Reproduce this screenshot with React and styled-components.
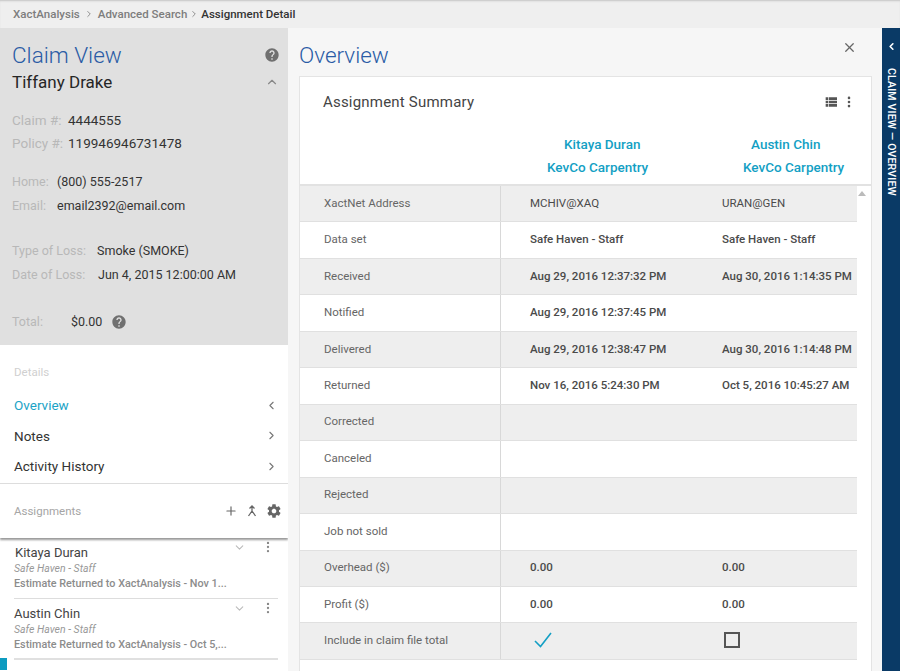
import React from "react";
import styled, { createGlobalStyle } from "styled-components";
import { ChevronDown, ChevronLeft, ChevronRight, ChevronUp, EllipsisVertical, Plus, X } from "lucide-react";

const GlobalStyle = createGlobalStyle`
  html, body { margin: 0; padding: 0; height: 100%; overflow: hidden; }
  body { font-family: Roboto, "Liberation Sans", sans-serif; color: #333; background: #f6f6f6; }
  * { box-sizing: border-box; }
`;

const Page = styled.div`
  width: 900px;
  height: 671px;
  display: flex;
  flex-direction: column;
  overflow: hidden;
`;

const Breadcrumbs = styled.div`
  height: 28px;
  flex: none;
  display: flex;
  align-items: center;
  padding-left: 13px;
  background: #efefef;
  box-shadow: inset 0 2px 2px -1px #c4c4c4;
  font-size: 11.5px;
  font-weight: 500;
  color: #7d7d7d;
`;

const Crumb = styled.span`
  color: ${(p) => (p.$current ? "#333" : "#7d7d7d")};
`;

const CrumbSep = styled.span`
  width: ${(p) => p.$w}px;
  display: flex;
  justify-content: center;
`;

const Body = styled.div`
  flex: 1;
  min-height: 0;
  display: flex;
`;

const Sidebar = styled.aside`
  width: 288px;
  flex: none;
  display: flex;
  flex-direction: column;
  background: #fff;
  overflow: hidden;
`;

const Summary = styled.div`
  height: 317px;
  flex: none;
  padding: 13px 8px 0 12px;
  background: #e0e0e0;
`;

const TitleRow = styled.div`
  display: flex;
  align-items: center;
  justify-content: space-between;
  height: 28px;
`;

const ClaimTitle = styled.h1`
  margin: 0;
  font-size: 22.5px;
  font-weight: 300;
  color: #2a5ba5;
`;

const NameRow = styled.div`
  display: flex;
  align-items: center;
  justify-content: space-between;
  height: 26px;
  margin-bottom: 13px;
  padding-right: 1px;
`;

const Name = styled.div`
  font-size: 17px;
  color: #262626;
`;

const FieldGroup = styled.div`
  margin-bottom: ${(p) => p.$gap}px;
`;

const Field = styled.div`
  display: flex;
  align-items: center;
  height: 23.5px;
  font-size: 13.5px;
  color: #333;
`;

const FieldLabel = styled.span`
  width: ${(p) => p.$w}px;
  flex: none;
  color: #b8b8b8;
`;

const SmallField = styled(Field)`
  font-size: 12.5px;
`;

const HelpSlot = styled.span`
  display: inline-flex;
  margin-left: ${(p) => p.$ml || 0}px;
`;

const DetailsList = styled.div`
  height: 139px;
  flex: none;
  padding: 20px 10px 0 14px;
  border-bottom: 1px solid #ddd;
`;

const SectionLabel = styled.div`
  font-size: 11.5px;
  color: #d0d0d0;
  height: 14px;
  margin-bottom: 11px;
`;

const NavRow = styled.div`
  display: flex;
  align-items: center;
  justify-content: space-between;
  height: 30.5px;
  font-size: 13.5px;
  color: ${(p) => (p.$active ? "#1ba3c6" : "#333")};
  svg { color: #777; }
`;

const AssignHeader = styled.div`
  height: 54px;
  flex: none;
  display: flex;
  align-items: center;
  padding: 0 6px 0 14px;
  box-shadow: 0 2px 2px #999;
  position: relative;
  z-index: 1;
`;

const AssignLabel = styled.div`
  flex: 1;
  font-size: 11.5px;
  color: #a5a5a5;
`;

const AssignTools = styled.div`
  display: flex;
  align-items: center;
  gap: 7px;
  color: #666;
`;

const AssignList = styled.div`
  flex: 1;
  min-height: 0;
  padding: 0 10px 0 14px;
  overflow: hidden;
`;

const AssignItem = styled.div`
  position: relative;
  height: 61px;
  padding-top: 7px;
  border-bottom: ${(p) => (p.$heavy ? "2px solid #e0e0e0" : "1px solid #ddd")};
`;

const AssignName = styled.div`
  font-size: 13px;
  color: #444;
  height: 16px;
  padding-left: ${(p) => p.$indent || 0}px;
`;

const AssignPlan = styled.div`
  font-size: 10.5px;
  font-style: italic;
  color: #999;
  height: 15px;
  line-height: 15px;
`;

const AssignStatus = styled.div`
  font-size: 10.8px;
  font-weight: 500;
  color: #8c8c8c;
  height: 15px;
  line-height: 15px;
`;

const ItemActions = styled.div`
  position: absolute;
  top: 2px;
  right: 3px;
  display: flex;
  align-items: center;
  gap: 15px;
  color: #bbb;
  svg:last-child { color: #888; }
`;

const ActiveTab = styled.div`
  position: absolute;
  left: -14px;
  bottom: -12px;
  width: 7px;
  height: 12px;
  background: #0d9bc0;
`;

const Main = styled.main`
  flex: 1;
  min-width: 0;
  padding: 0 10px 0 11px;
  display: flex;
  flex-direction: column;
`;

const MainHead = styled.div`
  height: 48px;
  flex: none;
  display: flex;
  align-items: flex-start;
  justify-content: space-between;
  padding-right: 15px;
  color: #666;
  svg { margin-top: 12px; }
`;

const MainTitle = styled.h2`
  margin: 14px 0 0;
  font-size: 22.5px;
  font-weight: 300;
  color: #2a5ba5;
`;

const Card = styled.section`
  flex: 1;
  min-height: 0;
  background: #fff;
  border: 1px solid #e4e4e4;
  border-bottom: none;
  overflow: hidden;
`;

const CardHead = styled.div`
  height: 50px;
  display: flex;
  align-items: center;
  justify-content: space-between;
  padding: 0 15px 0 23px;
`;

const CardTitle = styled.div`
  font-size: 15px;
  letter-spacing: 0.2px;
  color: #444;
`;

const CardTools = styled.div`
  display: flex;
  align-items: center;
  gap: 3px;
  color: #555;
`;

const People = styled.div`
  display: grid;
  grid-template-columns: 201px 201px 185px;
  height: 57px;
  padding-top: 6px;
`;

const Person = styled.div`
  grid-column: ${(p) => p.$col};
  font-size: 13.5px;
  font-weight: 500;
  line-height: 23px;
  color: #139fc4;
`;

const PersonLine = styled.div`
  padding-left: ${(p) => p.$pad}px;
`;

const TableWrap = styled.div`
  position: relative;
  border-top: 2px solid #e2e2e2;
  padding-right: 14px;
`;

const ScrollArrow = styled.div`
  position: absolute;
  top: 5px;
  right: 5px;
  width: 0;
  height: 0;
  border-left: 4px solid transparent;
  border-right: 4px solid transparent;
  border-bottom: 5px solid #bbb;
`;

const Row = styled.div`
  height: 36.46px;
  display: grid;
  grid-template-columns: 201px 1fr;
  background: ${(p) => (p.$odd ? "#eeeeee" : "#fff")};
  border-bottom: 1px solid #e0e0e0;
  font-size: 11.5px;
`;

const RowLabel = styled.div`
  display: flex;
  align-items: center;
  padding: 0 0 2px 24px;
  color: #666;
  border-right: 1px solid #d8d8d8;
`;

const Values = styled.div`
  display: grid;
  grid-template-columns: 192px 1fr;
`;

const Value = styled.div`
  display: flex;
  align-items: center;
  padding: 0 0 2px ${(p) => p.$pad}px;
  font-weight: ${(p) => (p.$regular ? 400 : 500)};
  color: #4a4a4a;
  white-space: nowrap;
`;

const EmptyBox = styled.span`
  width: 16px;
  height: 16px;
  border: 2px solid #555;
`;

const Rail = styled.div`
  width: 18px;
  flex: none;
  background: #0a3a66;
  color: #fff;
  display: flex;
  flex-direction: column;
  align-items: center;
  padding-top: 13px;
`;

const RailText = styled.div`
  writing-mode: vertical-rl;
  margin-top: 16px;
  font-size: 10.5px;
  letter-spacing: 0.2px;
  font-weight: 500;
  white-space: nowrap;
`;

const rows = [
  ["XactNet Address", "MCHIV@XAQ", "URAN@GEN"],
  ["Data set", "Safe Haven - Staff", "Safe Haven - Staff"],
  ["Received", "Aug 29, 2016 12:37:32 PM", "Aug 30, 2016 1:14:35 PM"],
  ["Notified", "Aug 29, 2016 12:37:45 PM", ""],
  ["Delivered", "Aug 29, 2016 12:38:47 PM", "Aug 30, 2016 1:14:48 PM"],
  ["Returned", "Nov 16, 2016 5:24:30 PM", "Oct 5, 2016 10:45:27 AM"],
  ["Corrected", "", ""],
  ["Canceled", "", ""],
  ["Rejected", "", ""],
  ["Job not sold", "", ""],
  ["Overhead ($)", "0.00", "0.00"],
  ["Profit ($)", "0.00", "0.00"],
];

function HelpIcon() {
  return (
    <svg width="16" height="16" viewBox="0 0 24 24" fill="#707070">
      <path d="M12 2C6.48 2 2 6.48 2 12s4.48 10 10 10 10-4.48 10-10S17.52 2 12 2zm1 17h-2v-2h2v2zm2.07-7.75l-.9.92C13.45 12.9 13 13.5 13 15h-2v-.5c0-1.1.45-2.1 1.17-2.83l1.24-1.26c.37-.36.59-.86.59-1.41 0-1.1-.9-2-2-2s-2 .9-2 2H8c0-2.21 1.79-4 4-4s4 1.79 4 4c0 .88-.36 1.68-.93 2.25z" />
    </svg>
  );
}

function ViewListIcon() {
  return (
    <svg width="16" height="16" viewBox="0 0 24 24" fill="#555">
      <path d="M4 14h4v-4H4v4zm0 5h4v-4H4v4zM4 9h4V5H4v4zm5 5h12v-4H9v4zm0 5h12v-4H9v4zM9 5v4h12V5H9z" />
    </svg>
  );
}

function MergeIcon() {
  return (
    <svg width="14" height="14" viewBox="0 0 14 14" fill="none" stroke="#666" strokeWidth="1.3">
      <path d="M4.5 4.5 7 2l2.5 2.5M7 2v5M7 7 3.5 12M7 7l3.5 5" />
    </svg>
  );
}

function GearIcon() {
  return (
    <svg width="16" height="16" viewBox="0 0 24 24" fill="#666">
      <path d="M19.43 12.98c.04-.32.07-.64.07-.98s-.03-.66-.07-.98l2.11-1.65c.19-.15.24-.42.12-.64l-2-3.46c-.12-.22-.39-.3-.61-.22l-2.49 1c-.52-.4-1.08-.73-1.69-.98l-.38-2.65C14.46 2.18 14.25 2 14 2h-4c-.25 0-.46.18-.49.42l-.38 2.65c-.61.25-1.17.59-1.69.98l-2.49-1c-.23-.09-.49 0-.61.22l-2 3.46c-.13.22-.07.49.12.64l2.11 1.65c-.04.32-.07.65-.07.98s.03.66.07.98l-2.11 1.65c-.19.15-.24.42-.12.64l2 3.46c.12.22.39.3.61.22l2.49-1c.52.4 1.08.73 1.69.98l.38 2.65c.03.24.24.42.49.42h4c.25 0 .46-.18.49-.42l.38-2.65c.61-.25 1.17-.59 1.69-.98l2.49 1c.23.09.49 0 .61-.22l2-3.46c.12-.22.07-.49-.12-.64l-2.11-1.65zM12 15.5c-1.93 0-3.5-1.57-3.5-3.5s1.57-3.5 3.5-3.5 3.5 1.57 3.5 3.5-1.57 3.5-3.5 3.5z" />
    </svg>
  );
}

function CheckMark() {
  return (
    <svg width="18" height="16" viewBox="0 0 18 16" fill="none" stroke="#139fc4" strokeWidth="1.6">
      <path d="M1 9l5.5 5.5L17 1" />
    </svg>
  );
}

function AssignmentItem({ name, status, indent, active, heavy }) {
  return (
    <AssignItem $heavy={heavy}>
      <AssignName $indent={indent}>{name}</AssignName>
      <AssignPlan>Safe Haven - Staff</AssignPlan>
      <AssignStatus>{status}</AssignStatus>
      <ItemActions>
        <ChevronDown size={13} />
        <EllipsisVertical size={14} />
      </ItemActions>
      {active && <ActiveTab />}
    </AssignItem>
  );
}

export default function App() {
  return (
    <Page>
      <GlobalStyle />
      <Breadcrumbs>
        <Crumb>XactAnalysis</Crumb>
        <CrumbSep $w={18}><ChevronRight size={10} /></CrumbSep>
        <Crumb>Advanced Search</Crumb>
        <CrumbSep $w={14}><ChevronRight size={10} /></CrumbSep>
        <Crumb $current>Assignment Detail</Crumb>
      </Breadcrumbs>
      <Body>
        <Sidebar>
          <Summary>
            <TitleRow>
              <ClaimTitle>Claim View</ClaimTitle>
              <HelpIcon />
            </TitleRow>
            <NameRow>
              <Name>Tiffany Drake</Name>
              <ChevronUp size={14} color="#888" />
            </NameRow>
            <FieldGroup $gap={15}>
              <Field><FieldLabel $w={56}>Claim #:</FieldLabel>4444555</Field>
              <Field><FieldLabel $w={56}>Policy #:</FieldLabel>119946946731478</Field>
            </FieldGroup>
            <FieldGroup $gap={22}>
              <SmallField><FieldLabel $w={45}>Home:</FieldLabel>(800) 555-2517</SmallField>
              <SmallField><FieldLabel $w={45}>Email:</FieldLabel>email2392@email.com</SmallField>
            </FieldGroup>
            <FieldGroup $gap={24}>
              <SmallField><FieldLabel $w={85}>Type of Loss:</FieldLabel>Smoke (SMOKE)</SmallField>
              <SmallField><FieldLabel $w={86}>Date of Loss:</FieldLabel>Jun 4, 2015 12:00:00 AM</SmallField>
            </FieldGroup>
            <SmallField>
              <FieldLabel $w={59}>Total:</FieldLabel>$0.00
              <HelpSlot $ml={9}><HelpIcon /></HelpSlot>
            </SmallField>
          </Summary>
          <DetailsList>
            <SectionLabel>Details</SectionLabel>
            <NavRow $active>Overview<ChevronLeft size={13} /></NavRow>
            <NavRow>Notes<ChevronRight size={13} /></NavRow>
            <NavRow>Activity History<ChevronRight size={13} /></NavRow>
          </DetailsList>
          <AssignHeader>
            <AssignLabel>Assignments</AssignLabel>
            <AssignTools>
              <Plus size={14} />
              <MergeIcon />
              <GearIcon />
            </AssignTools>
          </AssignHeader>
          <AssignList>
            <AssignmentItem name="Kitaya Duran" indent={1} status="Estimate Returned to XactAnalysis - Nov 1..." />
            <AssignmentItem name="Austin Chin" status="Estimate Returned to XactAnalysis - Oct 5,..." active heavy />
          </AssignList>
        </Sidebar>
        <Main>
          <MainHead>
            <MainTitle>Overview</MainTitle>
            <X size={15} />
          </MainHead>
          <Card>
            <CardHead>
              <CardTitle>Assignment Summary</CardTitle>
              <CardTools>
                <ViewListIcon />
                <EllipsisVertical size={14} strokeWidth={2.5} />
              </CardTools>
            </CardHead>
            <People>
              <Person $col={2}>
                <PersonLine $pad={63}>Kitaya Duran</PersonLine>
                <PersonLine $pad={46}>KevCo Carpentry</PersonLine>
              </Person>
              <Person $col={3}>
                <PersonLine $pad={49}>Austin Chin</PersonLine>
                <PersonLine $pad={41}>KevCo Carpentry</PersonLine>
              </Person>
            </People>
            <TableWrap>
              <ScrollArrow />
              {rows.map(([label, a, b], i) => (
                <Row key={label} $odd={i % 2 === 0}>
                  <RowLabel>{label}</RowLabel>
                  <Values>
                    <Value $pad={29} $regular={i === 0}>{a}</Value>
                    <Value $pad={29} $regular={i === 0}>{b}</Value>
                  </Values>
                </Row>
              ))}
              <Row $odd>
                <RowLabel>Include in claim file total</RowLabel>
                <Values>
                  <Value $pad={33}><CheckMark /></Value>
                  <Value $pad={31}><EmptyBox /></Value>
                </Values>
              </Row>
            </TableWrap>
          </Card>
        </Main>
        <Rail>
          <ChevronLeft size={11} strokeWidth={3.5} />
          <RailText>CLAIM VIEW — OVERVIEW</RailText>
        </Rail>
      </Body>
    </Page>
  );
}
